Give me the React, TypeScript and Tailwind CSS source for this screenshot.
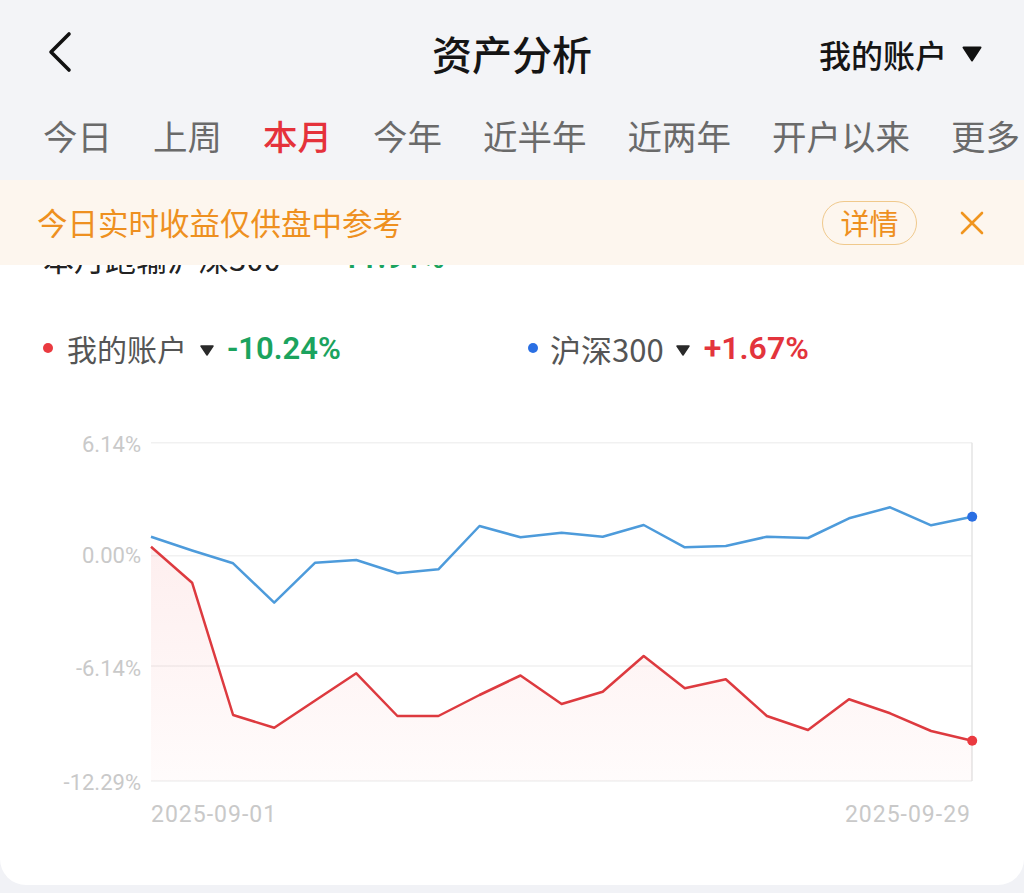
import React from "react";

const xs = Array.from({ length: 21 }, (_, i) => 151 + i * 41.06);
const redY = [546.7, 582.7, 715, 727.7, 700.5, 673.3, 716, 716, 695, 675.5, 704, 691.7, 656, 688.3, 679.3, 716, 730, 699.3, 713.3, 731, 740.7];
const blueY = [536.7, 550.5, 563.3, 602.7, 562.7, 560, 573.3, 569.3, 526, 537.3, 532.7, 536.7, 525, 547.3, 546, 536.7, 538, 518.3, 507.3, 525.3, 516.7];
const OY = 420;

function pts(ys: number[]) {
  return ys.map((y, i) => `${xs[i].toFixed(1)},${(y - OY).toFixed(1)}`).join(" ");
}

function Chart() {
  const redPts = pts(redY);
  const area = `${xs[0]},${781 - OY} ${redPts} ${xs[20].toFixed(1)},${781 - OY}`;
  const grid = [442.7, 555.7, 666, 781];
  const labels = [
    { t: "6.14%", y: 452 },
    { t: "0.00%", y: 563 },
    { t: "-6.14%", y: 676 },
    { t: "-12.29%", y: 790 },
  ];
  return (
    <svg width="1024" height="420" viewBox="0 0 1024 420" className="block">
      <defs>
        <linearGradient id="rf" x1="0" y1={546 - OY} x2="0" y2={781 - OY} gradientUnits="userSpaceOnUse">
          <stop offset="0" stopColor="#f04848" stopOpacity="0.09" />
          <stop offset="1" stopColor="#f04848" stopOpacity="0.02" />
        </linearGradient>
      </defs>
      {grid.map((g) => (
        <line key={g} x1="151" x2="972" y1={g - OY} y2={g - OY} stroke="#f1f1f1" strokeWidth="1.5" />
      ))}
      <line x1="972" x2="972" y1={442.7 - OY} y2={781 - OY} stroke="#e4e4e4" strokeWidth="1.5" />
      {labels.map((l) => (
        <text key={l.t} x="141" y={l.y - OY} textAnchor="end" fontSize="22" fill="#c9c9c9" fontFamily="Roboto, sans-serif">
          {l.t}
        </text>
      ))}
      <text x="151" y={822 - OY} fontSize="23" letterSpacing="1" fill="#c9c9c9" fontFamily="Roboto, sans-serif">
        2025-09-01
      </text>
      <text x="971" y={822 - OY} textAnchor="end" fontSize="23" letterSpacing="1" fill="#c9c9c9" fontFamily="Roboto, sans-serif">
        2025-09-29
      </text>
      <polygon points={area} fill="url(#rf)" />
      <polyline points={pts(blueY)} fill="none" stroke="#4d9bdb" strokeWidth="2.5" strokeLinejoin="round" />
      <polyline points={redPts} fill="none" stroke="#dd3a3f" strokeWidth="2.5" strokeLinejoin="round" />
      <circle cx={xs[20]} cy={blueY[20] - OY} r="5" fill="#2a6fe3" />
      <circle cx={xs[20]} cy={redY[20] - OY} r="5" fill="#ea3a40" />
    </svg>
  );
}

const tabs = ["今日", "上周", "本月", "今年", "近半年", "近两年", "开户以来", "更多"];

export default function App() {
  return (
    <div className="w-[1024px] h-[893px] overflow-hidden bg-[#f1f2f6] font-['Roboto','Noto_Sans_CJK_SC',sans-serif]">
      {/* Header */}
      <div className="h-[180px] bg-[#f3f4f7] flex flex-col">
        <div className="h-[104px] grid grid-cols-[1fr_auto_1fr] items-center px-[46px]">
          <svg width="28" height="42" viewBox="0 0 28 42" className="block">
            <path d="M23 3 L5 21 L23 39" fill="none" stroke="#111" strokeWidth="3.6" strokeLinecap="round" strokeLinejoin="round" />
          </svg>
          <span className="text-[40px] leading-none font-medium text-[#151515] font-['Noto_Sans_CJK_SC',sans-serif] mt-[2px]">资产分析</span>
          <div className="flex items-center justify-end gap-[15px] mt-[4px] -mr-[4px]">
            <span className="text-[32px] leading-none font-medium text-[#151515] font-['Noto_Sans_CJK_SC',sans-serif]">我的账户</span>
            <svg width="20" height="16" viewBox="0 0 20 16" className="block">
              <path d="M1.5 1.5 H18.5 L10 14.5 Z" fill="#111" stroke="#111" strokeWidth="2" strokeLinejoin="round" />
            </svg>
          </div>
        </div>
        <div className="h-[62px] flex items-center pl-[43px] gap-[41px] whitespace-nowrap">
          {tabs.map((t) => (
            <span
              key={t}
              className={
                t === "本月"
                  ? "text-[34.5px] leading-none text-[#e5323b] font-medium font-['Noto_Sans_CJK_SC',sans-serif]"
                  : "text-[34.5px] leading-none text-[#6a6a6a] font-['Noto_Sans_CJK_SC',sans-serif]"
              }
            >
              {t}
            </span>
          ))}
        </div>
      </div>

      {/* Card */}
      <div className="relative h-[705px] bg-white rounded-b-[26px] overflow-hidden">
        <div className="h-[62px]" />
        <div className="h-[30px] flex items-center pl-[43px] text-[31px] leading-none whitespace-nowrap">
          <span className="text-[#222] font-['Noto_Sans_CJK_SC',sans-serif]">本月跑输沪深300</span>
          <span className="ml-[50px] text-[#1ba35e] font-semibold">-11.91%</span>
        </div>
        <div className="mt-[56px] h-[40px] flex items-center pl-[43px]">
          <div className="w-[485px] flex items-center">
            <span className="w-[10px] h-[10px] rounded-full bg-[#ea3a40]" />
            <span className="ml-[14px] text-[30px] leading-none text-[#555] font-['Noto_Sans_CJK_SC',sans-serif]">我的账户</span>
            <svg width="14" height="11" viewBox="0 0 14 11" className="ml-[13px] mt-[4px]">
              <path d="M1 1 H13 L7 10 Z" fill="#2a2a2a" stroke="#2a2a2a" strokeWidth="1.5" strokeLinejoin="round" />
            </svg>
            <span className="ml-[13px] text-[31px] leading-none font-semibold text-[#1ba35e]">-10.24%</span>
          </div>
          <div className="flex items-center">
            <span className="w-[10px] h-[10px] rounded-full bg-[#2a6fe3]" />
            <span className="ml-[12px] text-[31px] leading-none text-[#555] font-['Noto_Sans_CJK_SC',sans-serif]">沪深300</span>
            <svg width="14" height="11" viewBox="0 0 14 11" className="ml-[12px] mt-[4px]">
              <path d="M1 1 H13 L7 10 Z" fill="#2a2a2a" stroke="#2a2a2a" strokeWidth="1.5" strokeLinejoin="round" />
            </svg>
            <span className="ml-[14px] text-[32px] leading-none font-semibold text-[#e3343c]">+1.67%</span>
          </div>
        </div>
        <div className="mt-[52px]">
          <Chart />
        </div>

        {/* Banner overlay */}
        <div className="absolute inset-x-0 top-0 h-[85px] bg-[#fdf6ee] flex items-center pl-[37px] pr-[40px]">
          <span className="flex-1 text-[30.5px] leading-none text-[#ee9020] font-['Noto_Sans_CJK_SC',sans-serif]">今日实时收益仅供盘中参考</span>
          <div className="h-[44px] w-[95px] rounded-full border-[1.5px] border-[#f0c98c] flex items-center justify-center text-[29px] leading-none text-[#ee9020] font-['Noto_Sans_CJK_SC',sans-serif]">
            详情
          </div>
          <svg width="24" height="24" viewBox="0 0 24 24" className="ml-[43px]">
            <path d="M2 2 L22 22 M22 2 L2 22" stroke="#f0951f" strokeWidth="2.6" strokeLinecap="round" />
          </svg>
        </div>
      </div>
    </div>
  );
}
